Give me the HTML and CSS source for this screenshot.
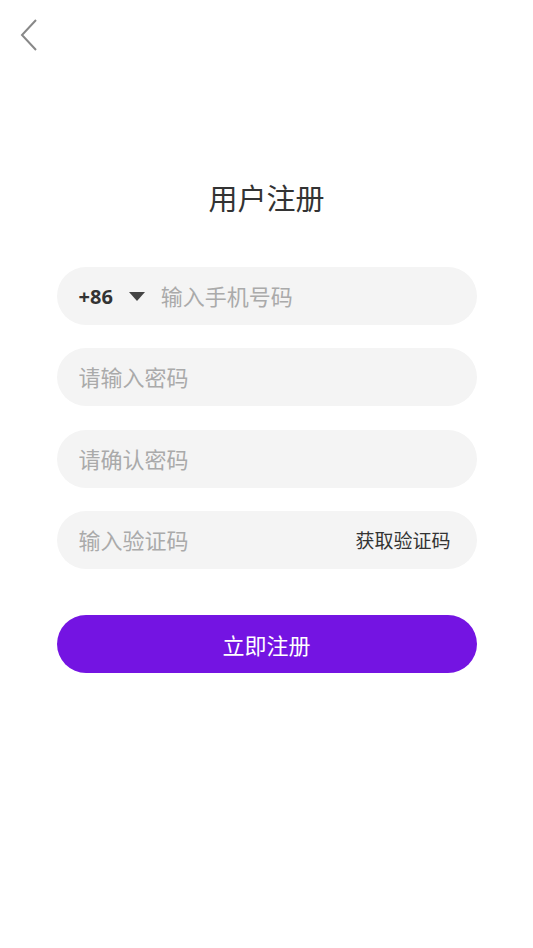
FILE: index.html
```html
<!DOCTYPE html>
<html lang="zh">
<head>
    <meta charset="UTF-8">
    <meta name="viewport" content="width=device-width, initial-scale=1.0">
    <title>用户注册</title>
    <link rel="stylesheet" href="styles.css">
</head>
<body>
    <div class="top-bar">
        <a class="back" href="#">
            <svg width="20" height="34" viewBox="0 0 20 34">
                <polyline points="16,2 2,17 16,32" fill="none" stroke="#888" stroke-width="2"/>
            </svg>
        </a>
    </div>

    <h1 class="title">用户注册</h1>

    <form class="reg-form">
        <div class="field">
            <span class="code">+86</span>
            <span class="arrow"></span>
            <input type="tel" placeholder="输入手机号码">
        </div>
        <div class="field">
            <input type="password" placeholder="请输入密码">
        </div>
        <div class="field">
            <input type="password" placeholder="请确认密码">
        </div>
        <div class="field">
            <input type="text" placeholder="输入验证码">
            <span class="get-code">获取验证码</span>
        </div>
        <button type="submit" class="submit">立即注册</button>
    </form>
</body>
</html>
```

FILE: styles.css
```css
body {
    margin: 0;
    padding: 0;
    background-color: #fff;
    font-family: "Noto Sans", "Noto Sans CJK SC", sans-serif;
    color: #333;
}

.top-bar {
    height: 70px;
    padding: 18px 0 0 20px;
    box-sizing: border-box;
}

.back {
    display: inline-block;
}

.title {
    margin: 107px 0 0;
    text-align: center;
    font-size: 29px;
    font-weight: normal;
    color: #333;
    line-height: 44px;
}

.reg-form {
    width: 420px;
    margin: 46px auto 0;
    display: flex;
    flex-direction: column;
    gap: 23.3px;
}

.field {
    height: 58px;
    background-color: #f4f4f4;
    border-radius: 29px;
    display: flex;
    align-items: center;
    padding: 0 26px 0 22px;
    box-sizing: border-box;
}

.field input {
    flex: 1;
    min-width: 0;
    border: none;
    background: transparent;
    outline: none;
    font-family: inherit;
    font-size: 22px;
    color: #333;
    padding: 0;
}

.field input::placeholder {
    color: #aaa;
}

.code {
    font-size: 20px;
    font-weight: bold;
    color: #333;
}

.arrow {
    width: 0;
    height: 0;
    border-left: 8px solid transparent;
    border-right: 8px solid transparent;
    border-top: 9px solid #444;
    margin: 0 16px 0 16px;
}

.get-code {
    font-size: 19px;
    color: #333;
}

.submit {
    margin-top: 22.5px;
    height: 58px;
    border: none;
    border-radius: 29px;
    background-color: #7414e2;
    color: #fff;
    font-family: inherit;
    font-size: 22px;
    cursor: pointer;
}
```
